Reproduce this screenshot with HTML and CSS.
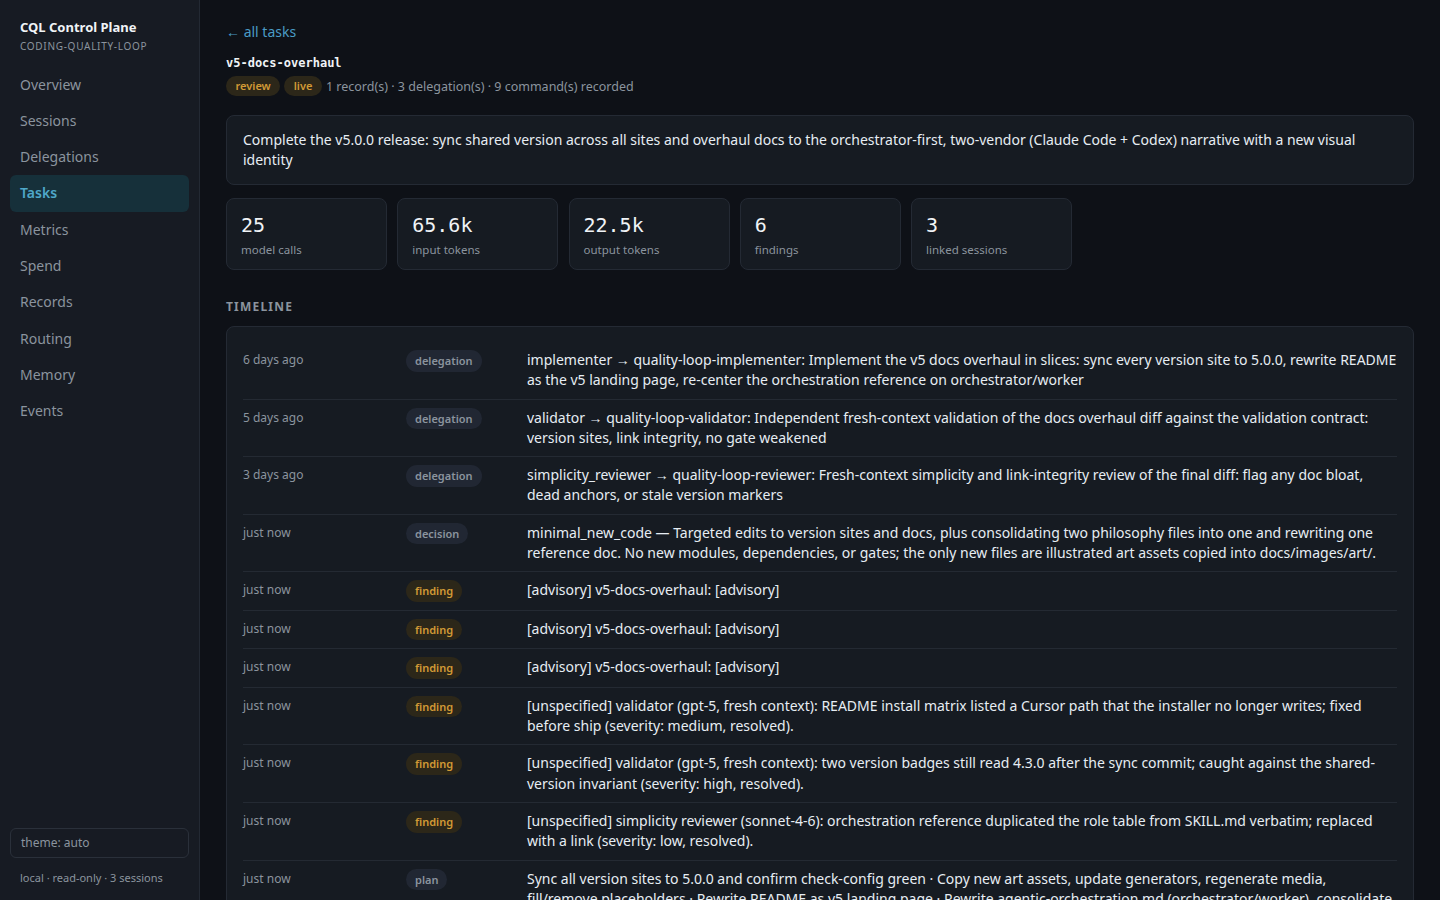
FILE: index.html
```html
<!DOCTYPE html>
<html lang="en">
<head>
    <meta charset="UTF-8">
    <meta name="viewport" content="width=device-width, initial-scale=1.0">
    <title>v5-docs-overhaul · CQL Control Plane</title>
    <link rel="stylesheet" href="styles.css">
</head>
<body>
    <!-- Sidebar navigation -->
    <aside class="sidebar">
        <div class="brand">
            <div class="brand-name">CQL Control Plane</div>
            <div class="brand-sub">coding-quality-loop</div>
        </div>

        <nav class="nav">
            <a href="#">Overview</a>
            <a href="#">Sessions</a>
            <a href="#">Delegations</a>
            <a href="#" class="active">Tasks</a>
            <a href="#">Metrics</a>
            <a href="#">Spend</a>
            <a href="#">Records</a>
            <a href="#">Routing</a>
            <a href="#">Memory</a>
            <a href="#">Events</a>
        </nav>

        <div class="sidebar-foot">
            <button class="theme-btn">theme: auto</button>
            <div class="foot-note">local · read-only · 3 sessions</div>
        </div>
    </aside>

    <main class="main">
        <a href="#" class="back">← all tasks</a>
        <h1 class="task-id">v5-docs-overhaul</h1>
        <div class="task-meta">
            <span class="pill amber">review</span>
            <span class="pill amber">live</span>
            <span class="meta-text">1 record(s) · 3 delegation(s) · 9 command(s) recorded</span>
        </div>

        <div class="panel goal">
            Complete the v5.0.0 release: sync shared version across all sites and overhaul docs to the orchestrator-first, two-vendor (Claude Code + Codex) narrative with a new visual identity
        </div>

        <div class="stats">
            <div class="stat"><div class="stat-num">25</div><div class="stat-label">model calls</div></div>
            <div class="stat"><div class="stat-num">65.6k</div><div class="stat-label">input tokens</div></div>
            <div class="stat"><div class="stat-num">22.5k</div><div class="stat-label">output tokens</div></div>
            <div class="stat"><div class="stat-num">6</div><div class="stat-label">findings</div></div>
            <div class="stat"><div class="stat-num">3</div><div class="stat-label">linked sessions</div></div>
        </div>

        <h2 class="section-title">Timeline</h2>

        <div class="panel timeline">
            <div class="row">
                <span class="when">6 days ago</span>
                <span class="kind"><span class="pill">delegation</span></span>
                <span class="what">implementer → quality-loop-implementer: Implement the v5 docs overhaul in slices: sync every version site to 5.0.0, rewrite README as the v5 landing page, re-center the orchestration reference on orchestrator/worker</span>
            </div>
            <div class="row">
                <span class="when">5 days ago</span>
                <span class="kind"><span class="pill">delegation</span></span>
                <span class="what">validator → quality-loop-validator: Independent fresh-context validation of the docs overhaul diff against the validation contract: version sites, link integrity, no gate weakened</span>
            </div>
            <div class="row">
                <span class="when">3 days ago</span>
                <span class="kind"><span class="pill">delegation</span></span>
                <span class="what">simplicity_reviewer → quality-loop-reviewer: Fresh-context simplicity and link-integrity review of the final diff: flag any doc bloat, dead anchors, or stale version markers</span>
            </div>
            <div class="row">
                <span class="when">just now</span>
                <span class="kind"><span class="pill">decision</span></span>
                <span class="what">minimal_new_code — Targeted edits to version sites and docs, plus consolidating two philosophy files into one and rewriting one reference doc. No new modules, dependencies, or gates; the only new files are illustrated art assets copied into docs/images/art/.</span>
            </div>
            <div class="row">
                <span class="when">just now</span>
                <span class="kind"><span class="pill amber">finding</span></span>
                <span class="what">[advisory] v5-docs-overhaul: [advisory]</span>
            </div>
            <div class="row">
                <span class="when">just now</span>
                <span class="kind"><span class="pill amber">finding</span></span>
                <span class="what">[advisory] v5-docs-overhaul: [advisory]</span>
            </div>
            <div class="row">
                <span class="when">just now</span>
                <span class="kind"><span class="pill amber">finding</span></span>
                <span class="what">[advisory] v5-docs-overhaul: [advisory]</span>
            </div>
            <div class="row">
                <span class="when">just now</span>
                <span class="kind"><span class="pill amber">finding</span></span>
                <span class="what">[unspecified] validator (gpt-5, fresh context): README install matrix listed a Cursor path that the installer no longer writes; fixed before ship (severity: medium, resolved).</span>
            </div>
            <div class="row">
                <span class="when">just now</span>
                <span class="kind"><span class="pill amber">finding</span></span>
                <span class="what">[unspecified] validator (gpt-5, fresh context): two version badges still read 4.3.0 after the sync commit; caught against the shared-version invariant (severity: high, resolved).</span>
            </div>
            <div class="row">
                <span class="when">just now</span>
                <span class="kind"><span class="pill amber">finding</span></span>
                <span class="what">[unspecified] simplicity reviewer (sonnet-4-6): orchestration reference duplicated the role table from SKILL.md verbatim; replaced with a link (severity: low, resolved).</span>
            </div>
            <div class="row">
                <span class="when">just now</span>
                <span class="kind"><span class="pill">plan</span></span>
                <span class="what">Sync all version sites to 5.0.0 and confirm check-config green · Copy new art assets, update generators, regenerate media, fill/remove placeholders · Rewrite README as v5 landing page · Rewrite agentic-orchestration.md (orchestrator/worker), consolidate philosophy docs · Run validator and simplicity reviewer in fresh contexts</span>
            </div>
        </div>
    </main>
</body>
</html>
```

FILE: styles.css
```css
* {
    box-sizing: border-box;
}

body {
    margin: 0;
    display: flex;
    min-height: 100vh;
    font-family: "Noto Sans", "Open Sans", sans-serif;
    background-color: #0e1117;
    color: #e6edf3;
}

a {
    text-decoration: none;
}

/* ---- sidebar ---- */
.sidebar {
    width: 200px;
    flex-shrink: 0;
    height: 100vh;
    position: sticky;
    top: 0;
    display: flex;
    flex-direction: column;
    padding: 18px 10px 15px;
    background-color: #171b23;
    border-right: 1px solid #232933;
}

.brand {
    padding: 0 10px;
    margin-bottom: 13.5px;
}

.brand-name {
    font-size: 13px;
    font-weight: 700;
    line-height: 18px;
    color: #f0f3f6;
}

.brand-sub {
    margin-top: 3px;
    font-size: 10px;
    line-height: 14px;
    letter-spacing: 0.07em;
    text-transform: uppercase;
    color: #8b949e;
}

.nav {
    display: flex;
    flex-direction: column;
}

.nav a {
    padding: 8px 10px;
    font-size: 14px;
    line-height: 20.3px;
    color: #8b949e;
    border-radius: 6px;
}

.nav a.active {
    background-color: #16303a;
    color: #4fa8c9;
    font-weight: 600;
}

.sidebar-foot {
    margin-top: auto;
}

.theme-btn {
    width: 100%;
    padding: 6px 10px;
    text-align: left;
    font-family: inherit;
    font-size: 12px;
    line-height: 16px;
    color: #8b949e;
    background-color: transparent;
    border: 1px solid #2a303a;
    border-radius: 6px;
}

.foot-note {
    margin-top: 13px;
    padding: 0 10px;
    font-size: 11px;
    line-height: 14px;
    color: #8b949e;
}

/* ---- main column ---- */
.main {
    flex: 1;
    min-width: 0;
    padding: 20px 26px 24px 26px;
}

.back {
    display: inline-block;
    font-size: 14px;
    line-height: 20px;
    color: #4a9cc6;
}

.task-id {
    margin: 13px 0 0;
    font-family: "DejaVu Sans Mono", monospace;
    font-size: 12px;
    font-weight: 700;
    line-height: 16px;
    color: #f0f3f6;
}

.task-meta {
    display: flex;
    align-items: center;
    gap: 4px;
    margin-top: 5px;
}

.meta-text {
    font-size: 12.5px;
    color: #8b949e;
}

.pill {
    display: inline-block;
    padding: 3px 9px;
    font-size: 11px;
    font-weight: 600;
    line-height: 15.5px;
    border-radius: 11px;
    background-color: #212733;
    color: #8b949e;
}

.task-meta .pill {
    padding: 2px 9.5px;
    line-height: 16px;
}

.pill.amber {
    background-color: #2c2719;
    color: #d29a35;
}

.panel {
    background-color: #161b22;
    border: 1px solid #242a34;
    border-radius: 8px;
}

.goal {
    margin-top: 19px;
    padding: 14px 16px;
    font-size: 14px;
    line-height: 20px;
}

.stats {
    display: grid;
    grid-template-columns: repeat(5, 161px);
    gap: 10.25px;
    margin-top: 13px;
}

.stat {
    height: 72px;
    padding: 14px 14px 0;
    background-color: #161b22;
    border: 1px solid #242a34;
    border-radius: 8px;
}

.stat-num {
    font-family: "DejaVu Sans Mono", monospace;
    font-size: 20px;
    line-height: 24px;
    color: #f0f3f6;
}

.stat-label {
    margin-top: 5px;
    font-size: 11.5px;
    line-height: 16px;
    color: #8b949e;
}

.section-title {
    margin: 29px 0 11px;
    font-size: 12px;
    font-weight: 700;
    line-height: 16px;
    letter-spacing: 0.1em;
    text-transform: uppercase;
    color: #8b949e;
}

/* ---- timeline ---- */
.timeline {
    padding: 15px 16px 16px;
}

.row {
    display: grid;
    grid-template-columns: 163px 121px 1fr;
    align-items: start;
    padding: 8px 0;
    border-bottom: 1px solid #242a33;
}

.row:last-child {
    border-bottom: none;
}

.when {
    font-size: 12px;
    line-height: 20.3px;
    color: #8b949e;
}

.kind {
    display: flex;
    align-items: center;
    height: 21.5px;
}

.what {
    margin-right: -1px;
    font-size: 14px;
    line-height: 20.3px;
    color: #e6edf3;
}
```
